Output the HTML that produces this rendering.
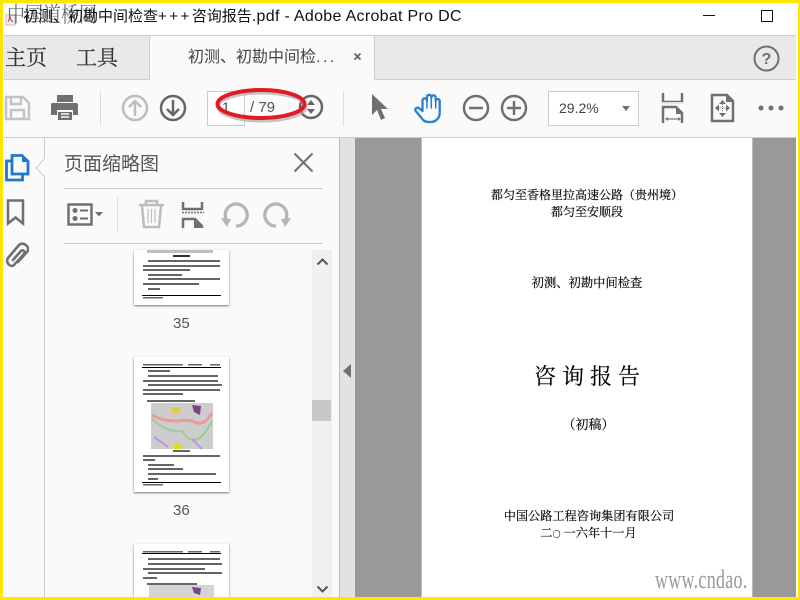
<!DOCTYPE html>
<html><head><meta charset="utf-8"><style>
html,body{margin:0;padding:0}
body{width:800px;height:600px;position:relative;overflow:hidden;background:#fff;font-family:"Liberation Sans","Noto Sans CJK SC",sans-serif}
div,svg{position:absolute}
.t{white-space:nowrap;line-height:1}
.d{color:#000;font-family:"Noto Serif CJK SC","Liberation Serif",serif;text-align:center;left:421px;width:332px;-webkit-text-stroke:.15px #000}
.b{filter:blur(.35px)}
</style></head><body>
<!-- title bar -->
<svg style="left:5px;top:14px" width="12" height="12"><rect x="1" y="0" width="9" height="11" fill="#f2f2f2" stroke="#bbb"/><path d="M3 8l2-5 1 3 2 2" stroke="#c33" fill="none"/></svg>
<div class="t" style="left:7px;top:3px;font-size:18px;color:#333;opacity:.72;transform:scaleY(1.2);transform-origin:top;font-family:'Noto Serif CJK SC',serif">中国道桥网</div>
<div class="t" style="left:23px;top:9px;font-size:15px;color:#111">初测、初勘中间检查<span style="letter-spacing:2.500px">+++</span>咨询报告<span style="font-size:16px;letter-spacing:.3px">.pdf - Adobe Acrobat Pro DC</span></div>
<div style="left:703px;top:15px;width:12px;height:1px;background:#111"></div>
<div style="left:761px;top:10px;width:10px;height:10px;border:1px solid #111"></div>
<!-- tab bar -->
<div style="left:4px;top:35px;width:794px;height:1px;background:#ccc"></div>
<div style="left:4px;top:36px;width:794px;height:43px;background:#e9e9e9"></div>
<div style="left:4px;top:79px;width:794px;height:1px;background:#ccc"></div>
<div style="left:149px;top:36px;width:224px;height:44px;background:#fafafa;border-left:1px solid #ccc;border-right:1px solid #ccc"></div>
<div class="t" style="left:5px;top:47px;font-size:21px;color:#333;font-family:'Noto Serif CJK SC',serif;-webkit-text-stroke:.2px #333">主页</div>
<div class="t" style="left:76px;top:47px;font-size:21px;color:#333;font-family:'Noto Serif CJK SC',serif;-webkit-text-stroke:.2px #333">工具</div>
<div class="t" style="left:188px;top:50px;font-size:16px;color:#444">初测、初勘中间检<span style="letter-spacing:2.500px">...</span></div>
<svg style="left:353px;top:52px" width="10" height="10"><path d="M1.500 1.500l6 6M7.500 1.500l-6 6" stroke="#666" stroke-width="1.800"/></svg>
<svg style="left:752px;top:44px" width="29" height="29"><circle cx="14.500" cy="14.500" r="12" fill="none" stroke="#707070" stroke-width="2"/><text x="14.500" y="20" font-size="16" font-weight="bold" text-anchor="middle" fill="#707070" font-family="Liberation Sans">?</text></svg>
<!-- toolbar -->
<div style="left:4px;top:80px;width:794px;height:57px;background:#fafafa"></div>
<div style="left:4px;top:137px;width:794px;height:1px;background:#ccc"></div>
<svg style="left:4px;top:94px" width="28" height="28" fill="none" stroke="#c4c4c4" stroke-width="2.500"><path d="M2 3h17l6 6v16H2z"/><path d="M7 3v7h10V3M7 25v-9h13v9"/></svg>
<svg style="left:50px;top:93px" width="30" height="30"><path d="M7 2h16v7H7z" fill="#707070"/><path d="M4 10h22a2 2 0 012 2v10h-5v-5H7v5H1V12a2 2 0 013-2z" fill="#707070"/><path d="M8 19h14v8H8z" fill="#707070"/><path d="M11 21h8M11 24h8" stroke="#fafafa" stroke-width="1.500"/></svg>
<div style="left:100px;top:91px;width:1px;height:35px;background:#ddd"></div>
<svg style="left:121px;top:94px" width="28" height="28" fill="none" stroke="#bdbdbd" stroke-width="2.500"><circle cx="14" cy="14" r="12"/><path d="M14 22V7M8 13l6-6 6 6"/></svg>
<svg style="left:159px;top:94px" width="28" height="28" fill="none" stroke="#666" stroke-width="2.500"><circle cx="14" cy="14" r="12"/><path d="M14 6v15M8 15l6 6 6-6"/></svg>
<div style="left:207px;top:91px;width:36px;height:33px;background:#fff;border:1px solid #ccc"></div>
<div class="t" style="left:222px;top:100px;font-size:14px;color:#444">1</div>
<div class="t" style="left:250px;top:100px;font-size:15px;color:#555">/ 79</div>
<svg style="left:298px;top:94px" width="26" height="26" fill="none" stroke="#666" stroke-width="2.500"><circle cx="13" cy="13" r="11"/><path d="M13 6l-4 5h8zM13 20l-4-5h8z" fill="#666" stroke="none"/></svg>
<svg style="left:215px;top:86px" width="100" height="40"><ellipse cx="47" cy="21" rx="44" ry="14" fill="none" stroke="#aaa" stroke-width="3" opacity=".7"/><ellipse cx="46" cy="18" rx="43.500" ry="14" fill="none" stroke="#e01b24" stroke-width="4"/></svg>
<div style="left:343px;top:91px;width:1px;height:35px;background:#ddd"></div>
<svg style="left:368px;top:93px" width="22" height="30"><path d="M4 1v21l5-5 4 10 4-2-4-9h7z" fill="#707070"/></svg>
<svg style="left:412px;top:92px" width="32" height="33" fill="none" stroke="#2b7fd0" stroke-width="2.300" stroke-linejoin="round" stroke-linecap="round"><path d="M10.500 19V8.500a2.200 2.200 0 0 1 4.400 0V5a2.200 2.200 0 0 1 4.400 0V5.500a2.200 2.200 0 0 1 4.400 0V9a2 2 0 0 1 4 0V21c0 5-4 9-9 9h-2c-4 0-6-2-8-5l-5-6c-1.500-2 1-4 3-3z"/><path d="M14.900 8v8M19.300 5v11M23.700 6v10" stroke-width="1.500"/></svg>
<svg style="left:462px;top:94px" width="28" height="28" fill="none" stroke="#707070" stroke-width="2.500"><circle cx="14" cy="14" r="12"/><path d="M7 14h14"/></svg>
<svg style="left:500px;top:94px" width="28" height="28" fill="none" stroke="#707070" stroke-width="2.500"><circle cx="14" cy="14" r="12"/><path d="M7 14h14M14 7v14"/></svg>
<div style="left:548px;top:91px;width:89px;height:33px;background:#fff;border:1px solid #ccc"></div>
<div class="t" style="left:559px;top:101px;font-size:14px;color:#444">29.2%</div>
<svg style="left:621px;top:106px" width="10" height="6"><path d="M1 0h8l-4 5z" fill="#707070"/></svg>
<svg style="left:660px;top:92px" width="26" height="32"><path d="M3 1v9h19V1" fill="none" stroke="#707070" stroke-width="2.500"/><path d="M2 11h21" stroke="#e4e4e4" stroke-width="2"/><path d="M3 31V15h13l6 6v10" fill="none" stroke="#707070" stroke-width="2.500"/><path d="M16 14v8h7z" fill="#707070"/><path d="M6 27h14" stroke="#707070" stroke-width="1.200"/><path d="M5 27l3-2v4zM21 27l-3-2v4z" fill="#707070"/></svg>
<svg style="left:710px;top:93px" width="26" height="30" fill="none" stroke="#707070" stroke-width="2.500"><path d="M2 2h15l6 6v20H2z"/><path d="M16 1v8h7z" fill="#707070" stroke="none"/><path d="M12.500 11v8M8.500 15h8" stroke-width="1" stroke-dasharray="1 1"/><path d="M12.500 7l-3.500 4h7zM12.500 24l-3.500-4h7zM5 15l4-3.500v7zM20 15l-4-3.500v7z" fill="#707070" stroke="none"/></svg>
<svg style="left:758px;top:103px" width="26" height="10" fill="#707070"><circle cx="3" cy="5" r="2.500"/><circle cx="13" cy="5" r="2.500"/><circle cx="23" cy="5" r="2.500"/></svg>
<!-- left rail -->
<div style="left:4px;top:138px;width:40px;height:459px;background:#fafafa"></div>
<div style="left:44px;top:138px;width:1px;height:459px;background:#ccc"></div>
<svg style="left:35px;top:158px" width="11" height="20"><path d="M10 0L1 10l9 9" fill="#fafafa" stroke="#ccc"/></svg>
<svg style="left:4px;top:152px" width="26" height="30" fill="none" stroke="#2177c9" stroke-width="2.800"><path d="M8 3.500h10l6 6V22H8z"/><path d="M18 2v8h7z" fill="#2177c9" stroke="none"/><path d="M8 9H2.500v19h16v-6"/></svg>
<svg style="left:6px;top:198px" width="19" height="30" fill="none" stroke="#707070" stroke-width="2.500"><path d="M2 2.500h15v23l-7.500-6-7.500 6z"/></svg>
<svg style="left:4px;top:241px" width="25" height="28" fill="none" stroke="#707070" stroke-width="2.600" stroke-linecap="round"><path d="M9 19L17 10c2-2 5 1 3 3L10 24c-3 3-9-2-6-7L15 4c4-4 12 2 8 7L14 21"/></svg>
<!-- panel -->
<div style="left:45px;top:138px;width:294px;height:459px;background:#fafafa"></div>
<div class="t" style="left:64px;top:155px;font-size:19px;color:#555">页面缩略图</div>
<svg style="left:293px;top:152px" width="21" height="21"><path d="M1.500 1.500l18 18M19.500 1.500l-18 18" stroke="#707070" stroke-width="2"/></svg>
<div style="left:64px;top:188px;width:259px;height:1px;background:#ccc"></div>
<div style="left:64px;top:243px;width:259px;height:1px;background:#ccc"></div>
<svg style="left:67px;top:203px" width="38" height="24"><rect x="1.500" y="1.500" width="23" height="20" fill="none" stroke="#707070" stroke-width="2.500"/><circle cx="8" cy="7.500" r="2.500" fill="#707070"/><circle cx="8" cy="15.500" r="2.500" fill="#707070"/><path d="M13 7.500h8M13 15.500h8" stroke="#707070" stroke-width="2"/><path d="M28 9h8l-4 4.500z" fill="#707070"/></svg>
<div style="left:117px;top:197px;width:1px;height:35px;background:#ddd"></div>
<svg style="left:138px;top:199px" width="27" height="31" fill="none" stroke="#bdbdbd" stroke-width="2.500"><path d="M1 6h25M8 5V2h11v3M4 7l2 21h15l2-21"/><path d="M10 10v14M13.500 10v14M17 10v14" stroke-width="1.200"/></svg>
<svg style="left:181px;top:200px" width="24" height="30"><path d="M2 2v7h19V2" fill="none" stroke="#707070" stroke-width="2.500"/><path d="M1 12.500h22" stroke="#707070" stroke-dasharray="2 1" stroke-width="1.600"/><path d="M2 28V19h12l7 7v2" fill="none" stroke="#707070" stroke-width="2.500"/><path d="M13 18l9 9v1h-9z" fill="#707070"/></svg>
<svg style="left:220px;top:201px" width="30" height="28" fill="none" stroke="#b5b5b5" stroke-width="3.300"><path d="M7 20A11 11 0 1 1 16 25"/><path d="M1 17l10 1-4 8z" fill="#b5b5b5" stroke="none"/></svg>
<svg style="left:262px;top:201px" width="30" height="28" fill="none" stroke="#b5b5b5" stroke-width="3.300"><path d="M23 20A11 11 0 1 0 14 25"/><path d="M29 17l-10 1 4 8z" fill="#b5b5b5" stroke="none"/></svg>
<!-- scrollbar -->
<div style="left:312px;top:250px;width:20px;height:347px;background:#f0f0f0"></div>
<div style="left:312px;top:400px;width:19px;height:21px;background:#c8c8c8"></div>
<svg style="left:316px;top:257px" width="13" height="9"><path d="M1.500 7.500L6.500 2.500l5 5" fill="none" stroke="#555" stroke-width="2"/></svg>
<svg style="left:316px;top:585px" width="13" height="9"><path d="M1.500 1.500L6.500 6.500l5-5" fill="none" stroke="#555" stroke-width="2"/></svg>
<!-- thumbnail 35 -->
<div style="left:134px;top:250px;width:95px;height:55px;background:#fff;box-shadow:0 1px 2px #777"></div>
<svg style="left:134px;top:250px" width="95" height="55" fill="#333">
<g class="b"><rect x="13" y="0" width="66" height="3" fill="#c4bcc0"/><rect x="39" y="5" width="17" height="2"/>
<g opacity=".75"><rect x="14" y="10" width="72" height="2"/><rect x="9" y="15" width="77" height="2"/><rect x="9" y="19" width="47" height="2"/><rect x="14" y="24" width="34" height="2"/><rect x="14" y="28" width="72" height="2"/><rect x="9" y="33" width="56" height="2"/><rect x="14" y="38" width="12" height="2"/><rect x="9" y="47" width="20" height="1.500"/></g></g>
<rect x="8" y="45" width="79" height="1" fill="#000"/></svg>
<div class="t" style="left:173px;top:316px;font-size:15px;color:#555">35</div>
<!-- thumbnail 36 -->
<div style="left:134px;top:357px;width:95px;height:135px;background:#fff;box-shadow:0 1px 2px #777"></div>
<svg style="left:134px;top:357px" width="95" height="135" fill="#333">
<g class="b"><g opacity=".75"><rect x="9" y="7" width="40" height="1.500"/><rect x="54" y="7" width="14" height="1.500"/><rect x="76" y="7" width="10" height="1.500"/>
<rect x="14" y="13" width="22" height="2"/><rect x="14" y="18" width="70" height="2"/><rect x="9" y="23" width="75" height="2"/><rect x="14" y="27" width="74" height="2"/><rect x="9" y="32" width="77" height="2"/><rect x="9" y="36" width="40" height="2"/><rect x="13" y="43" width="48" height="2"/>
<rect x="39" y="93" width="17" height="2"/><rect x="9" y="98" width="77" height="2"/><rect x="9" y="102" width="12" height="2"/><rect x="14" y="107" width="26" height="2"/><rect x="14" y="111" width="35" height="2"/><rect x="14" y="116" width="68" height="2"/><rect x="14" y="121" width="10" height="2"/><rect x="9" y="127" width="20" height="1.500"/></g>
<rect x="17" y="46" width="62" height="46" fill="#cdcdcd"/>
<path d="M18 58q10 6 25 6 14-2 20 2 8 2 15-10" stroke="#e99" stroke-width="3" fill="none"/>
<path d="M18 62q15 14 30 12 14 22 30-10" stroke="#9c9" stroke-width="2" fill="none"/>
<path d="M58 48l9 1-1 9-6-3z" fill="#748"/><path d="M38 50h8v6h-8z" fill="#dc4"/><path d="M40 86h8v6h-8z" fill="#dd2"/><path d="M20 80l14 10M58 82l10 10" stroke="#b9d" fill="none" stroke-width="2"/></g>
<rect x="8" y="125" width="79" height="1" fill="#000"/><rect x="8" y="10" width="79" height="1" fill="#000"/></svg>
<div class="t" style="left:173px;top:503px;font-size:15px;color:#555">36</div>
<!-- thumbnail 37 -->
<div style="left:134px;top:544px;width:95px;height:53px;background:#fff;box-shadow:0 1px 2px #777"></div>
<svg style="left:134px;top:544px" width="95" height="53" fill="#333">
<g class="b"><g opacity=".75"><rect x="9" y="7" width="40" height="1.500"/><rect x="54" y="7" width="14" height="1.500"/><rect x="76" y="7" width="10" height="1.500"/>
<rect x="14" y="14" width="72" height="2"/><rect x="14" y="19" width="74" height="2"/><rect x="9" y="24" width="62" height="2"/><rect x="14" y="28" width="74" height="2"/><rect x="9" y="33" width="14" height="2"/><rect x="13" y="39" width="50" height="2"/></g>
<rect x="15" y="41" width="65" height="12" fill="#d4d4d4"/><path d="M58 43l9 1-1 7-6-2z" fill="#748"/></g>
<rect x="8" y="9" width="79" height="1" fill="#000"/></svg>
<!-- splitter -->
<div style="left:339px;top:138px;width:1px;height:459px;background:#bdbdbd"></div>
<div style="left:340px;top:138px;width:15px;height:459px;background:#e2e2e2"></div>
<svg style="left:343px;top:364px" width="8" height="15"><path d="M8 0v14L0 7z" fill="#707070"/></svg>
<!-- document -->
<div style="left:355px;top:138px;width:441px;height:459px;background:#999"></div>
<div style="left:421px;top:138px;width:332px;height:459px;background:#fff;border-left:1px solid #bbb;border-right:1px solid #bbb;box-sizing:border-box"></div>
<div class="t d" style="top:189px;font-size:12px">都匀至香格里拉高速公路（贵州境）</div>
<div class="t d" style="top:206px;font-size:12px">都匀至安顺段</div>
<div class="t d" style="top:276px;font-size:12.300px">初测、初勘中间检查</div>
<div class="t d" style="top:365px;font-size:22px;letter-spacing:6px;text-indent:6px">咨询报告</div>
<div class="t d" style="top:417px;font-size:13px;text-indent:3px">（初稿）</div>
<div class="t d" style="top:510px;font-size:12.200px;text-indent:4px">中国公路工程咨询集团有限公司</div>
<div class="t d" style="top:527px;font-size:12.200px;text-indent:3px">二<span style="font-size:8px">○</span>&nbsp;一六年十一月</div>
<div class="t" style="left:655px;top:566px;font-size:23px;color:#999;font-family:'Liberation Serif',serif;letter-spacing:.4px;transform:scale(.78,1.15);transform-origin:left top">www.cndao.</div>
<!-- frame -->
<div style="left:796px;top:3px;width:2px;height:594px;background:#fff"></div>
<div style="left:0;top:0;width:800px;height:3px;background:#ffe600"></div>
<div style="left:0;top:0;width:3px;height:600px;background:#ffe600"></div>
<div style="left:0;top:597px;width:800px;height:3px;background:#ffe600"></div>
<div style="left:798px;top:0;width:2px;height:600px;background:#ffe600"></div>
</body></html>
